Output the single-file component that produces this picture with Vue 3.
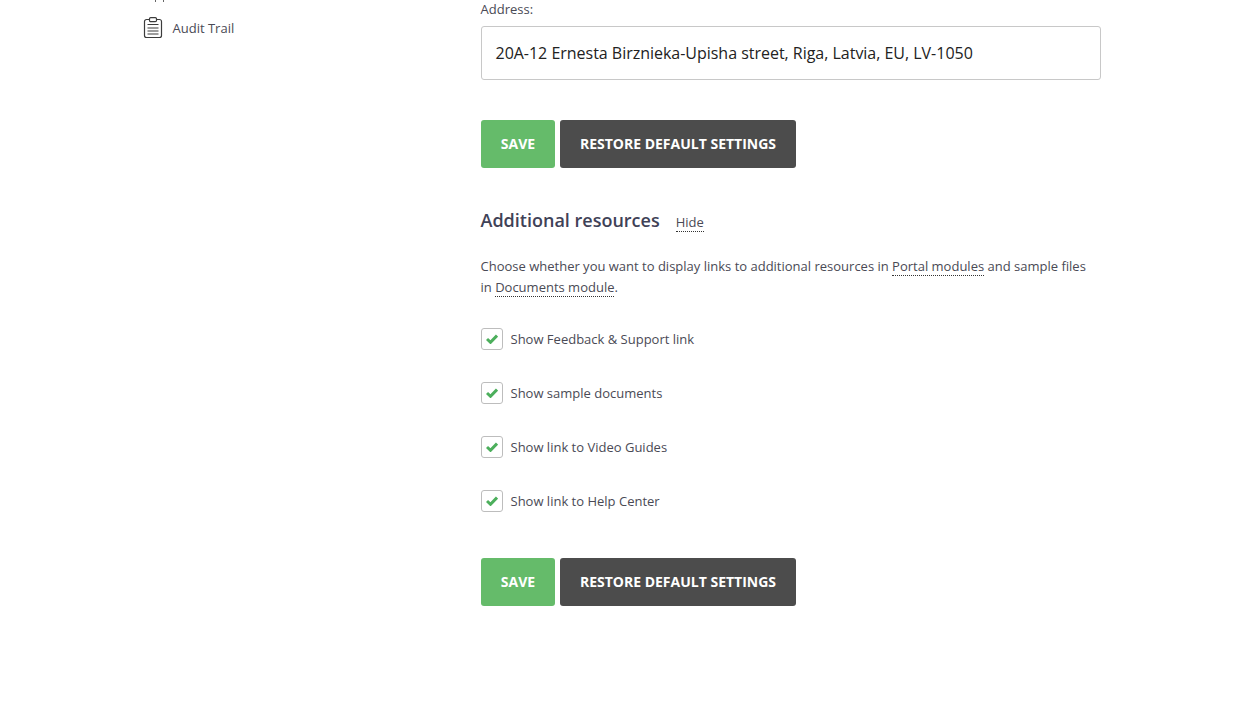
<script setup>
const checks = ['Show Feedback & Support link', 'Show sample documents', 'Show link to Video Guides', 'Show link to Help Center']
</script>

<template>
  <div class="page">
    <aside class="side">
      <div class="clipped-stub"><span class="stub-a"></span><span class="stub-b"></span></div>
      <div class="nav-item">
        <svg class="nav-icon" width="20" height="22" viewBox="0 0 20 22" fill="none" stroke="#3c3c3c" stroke-width="1.2">
          <path d="M6.500 2.500H3.500a2 2 0 0 0-2 2v14a2 2 0 0 0 2 2h13a2 2 0 0 0 2-2v-14a2 2 0 0 0-2-2h-3" />
          <rect x="6.500" y="0.600" width="7" height="4" rx="1.200" />
          <path d="M4.500 7.500h11M4.500 11h11M4.500 14h11M4.500 17h11" />
        </svg>
        <span class="nudge">Audit Trail</span>
      </div>
    </aside>
    <main class="main">
      <label class="field-label nudge">Address:</label>
      <div class="input"><span class="address">20A-12 Ernesta Birznieka-Upisha street, Riga, Latvia, EU, LV-1050</span></div>
      <div class="actions first">
        <button class="btn save">SAVE</button>
        <button class="btn restore">RESTORE DEFAULT SETTINGS</button>
      </div>
      <div class="heading">
        <h2 class="nudge">Additional resources</h2>
        <a class="dotted hide">Hide</a>
      </div>
      <p class="desc nudge">
        Choose whether you want to display links to additional resources in <a class="dotted">Portal modules</a> and sample files
        in <a class="dotted">Documents module</a>.
      </p>
      <div class="checks">
        <div v-for="c in checks" :key="c" class="check">
          <span class="box">
            <svg width="12" height="10" viewBox="0 0 12 10"><path d="M1 5 4.500 8.300 11 1.600" fill="none" stroke="#4caf5c" stroke-width="3" /></svg>
          </span>
          <span class="nudge">{{ c }}</span>
        </div>
      </div>
      <div class="actions">
        <button class="btn save">SAVE</button>
        <button class="btn restore">RESTORE DEFAULT SETTINGS</button>
      </div>
    </main>
  </div>
</template>

<style scoped>
.page {
  width: 1240px;
  height: 708px;
  overflow: hidden;
  display: flex;
  background: #fff;
  font-family: "Open Sans", sans-serif;
  color: #43434d;
}
.nudge {
  margin-left: -0.5px;
}
.side {
  width: 481px;
  flex: none;
  padding-left: 143px;
  box-sizing: border-box;
}
.clipped-stub {
  height: 2px;
  margin-bottom: 15px;
  display: flex;
  gap: 7px;
  padding-left: 12px;
}
.stub-a, .stub-b {
  width: 1px;
  height: 2px;
  background: #666;
}
.nav-item {
  display: flex;
  align-items: center;
  gap: 10px;
  height: 22px;
  font-size: 13px;
  color: #4a4a55;
}
.main {
  width: 620px;
  flex: none;
}
.field-label {
  display: block;
  font-size: 13px;
  line-height: 18px;
  height: 18px;
  color: #4a4a55;
}
.input {
  margin-top: 8px;
  height: 54px;
  box-sizing: border-box;
  border: 1px solid #c8c8c8;
  border-radius: 3px;
  padding-left: 13.500px;
  display: flex;
  align-items: center;
  font-size: 16px;
  color: #222;
}
.address {
  letter-spacing: -0.02px;
}
.actions {
  display: flex;
  gap: 5px;
}
.actions.first {
  margin-top: 40px;
}
.btn {
  height: 48px;
  border: 0;
  border-radius: 3px;
  padding: 0 0 2px;
  color: #fff;
  font-family: inherit;
  font-size: 14px;
  font-weight: 700;
}
.save {
  width: 74px;
  background: #65bb6a;
}
.restore {
  width: 236px;
  background: #4c4c4c;
}
.heading {
  margin-top: 39px;
  display: flex;
  align-items: baseline;
  gap: 16px;
  height: 27px;
}
h2 {
  margin: 0;
  font-size: 18px;
  font-weight: 600;
  line-height: 27px;
  color: #3f4257;
}
.dotted {
  border-bottom: 1px dotted #333;
}
.hide {
  font-size: 13px;
  line-height: 17px;
  color: #4a4a55;
}
.desc {
  margin-top: 22px;
  margin-bottom: 0;
  padding-right: 12px;
  font-size: 13px;
  line-height: 21px;
  color: #4a4a55;
}
.checks {
  margin-top: 30px;
  display: flex;
  flex-direction: column;
  gap: 32px;
}
.check {
  display: flex;
  align-items: center;
  gap: 8px;
  height: 22px;
  font-size: 13px;
  color: #4a4a55;
}
.box {
  width: 22px;
  height: 22px;
  box-sizing: border-box;
  border: 1px solid #bdbdbd;
  border-radius: 3px;
  display: flex;
  align-items: center;
  justify-content: center;
}
.checks + .actions {
  margin-top: 46px;
}
</style>

<style>
html, body { margin: 0; background: #fff; }
</style>
